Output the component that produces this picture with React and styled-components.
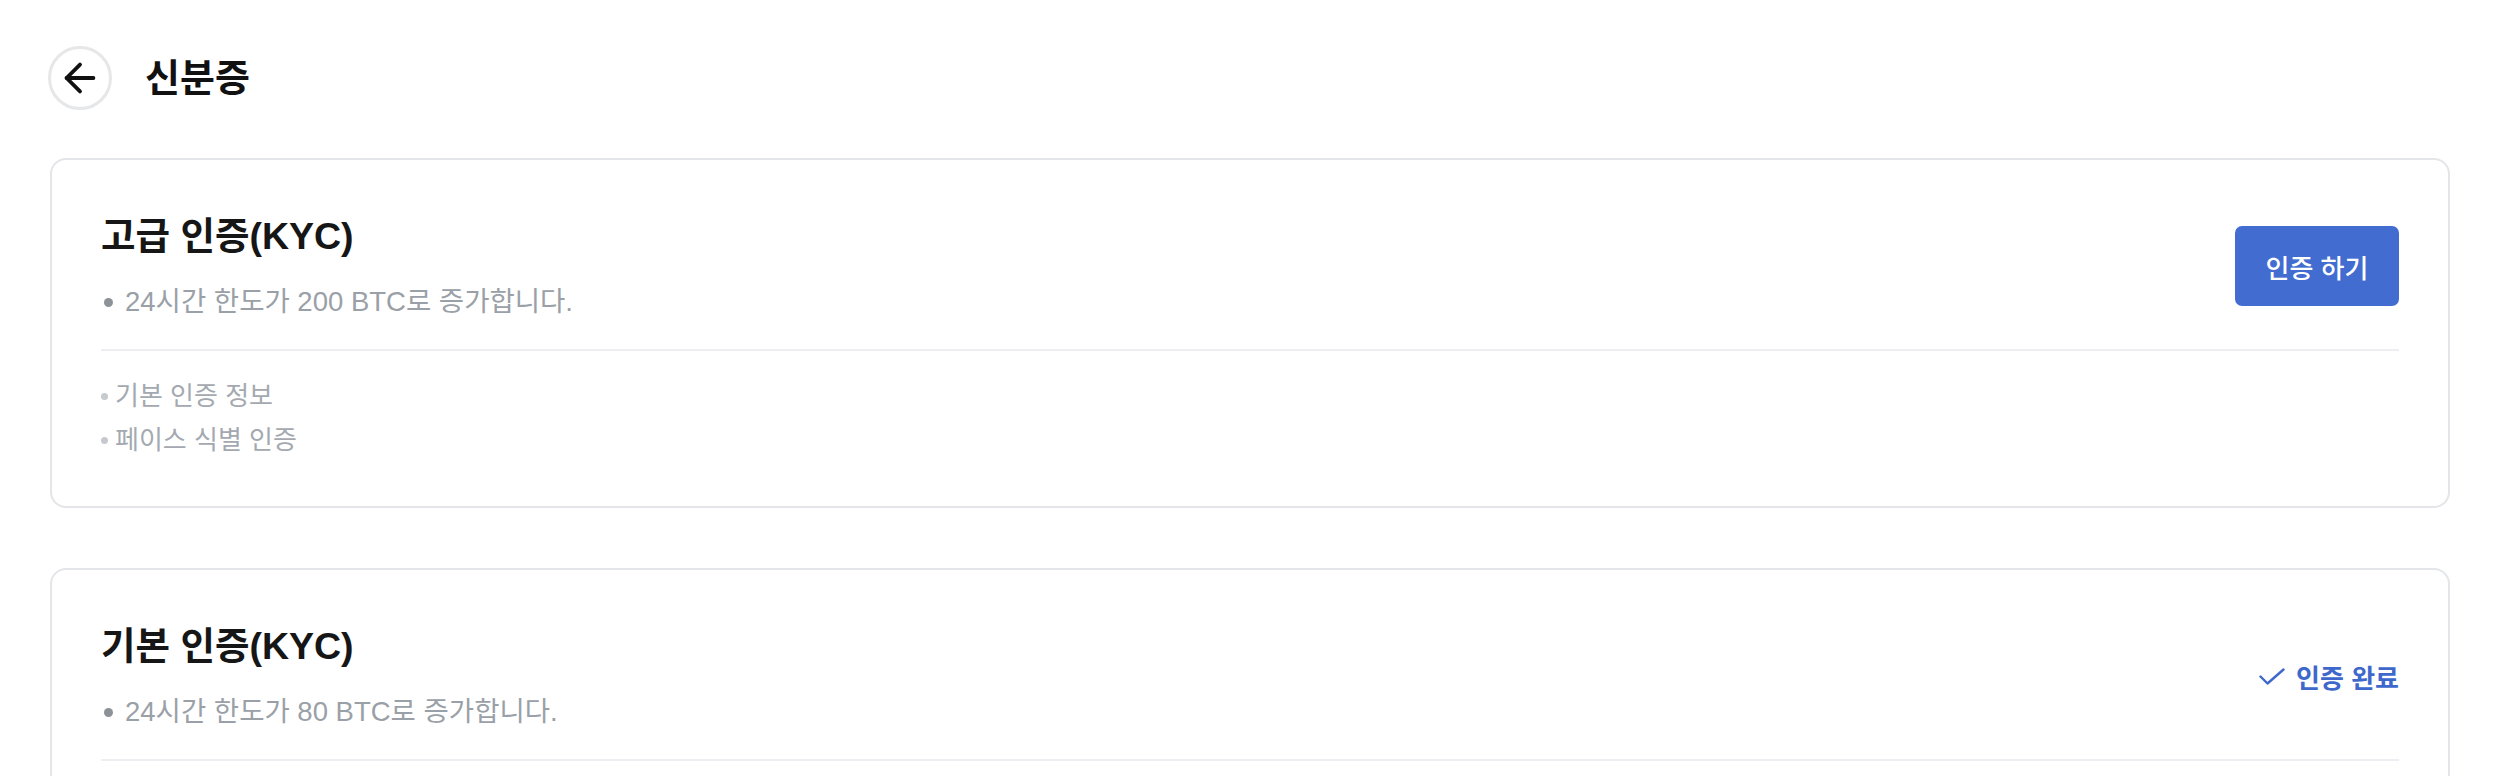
import React from "react";
import styled, { createGlobalStyle } from "styled-components";
import { ArrowLeft } from "lucide-react";

const GlobalStyle = createGlobalStyle`
  body {
    margin: 0;
    background: #ffffff;
    font-family: "Liberation Sans", "Noto Sans CJK KR", sans-serif;
    color: #111111;
  }
`;

const Page = styled.div`
  padding: 46px 58px 40px 50px;
`;

const Header = styled.header`
  display: flex;
  align-items: center;
  gap: 33px;
  margin-left: -2px;
  margin-bottom: 48px;
`;

const BackButton = styled.button`
  width: 64px;
  height: 64px;
  border-radius: 50%;
  border: 3px solid #e6e7e9;
  background: #ffffff;
  display: flex;
  align-items: center;
  justify-content: center;
  padding: 0;
  cursor: pointer;
  color: #111111;
`;

const PageTitle = styled.h1`
  margin: 0;
  font-size: 38px;
  font-weight: 700;
  line-height: 1;
`;

const CardList = styled.div`
  display: flex;
  flex-direction: column;
  gap: 60px;
`;

const Card = styled.section`
  border: 2px solid #e3e5e8;
  border-radius: 16px;
  padding: 52px 49px 44px 49px;
  background: #ffffff;
`;

const TopRow = styled.div`
  display: flex;
  align-items: center;
  justify-content: space-between;
`;

const Info = styled.div`
  display: flex;
  flex-direction: column;
`;

const CardTitle = styled.h2`
  margin: 0;
  font-size: 37.5px;
  font-weight: 600;
  line-height: 48px;
  color: #161616;
`;

const Benefit = styled.p`
  margin: 24px 0 0;
  font-size: 27.5px;
  line-height: 36px;
  color: #9aa0a7;
  display: flex;
  align-items: center;

  &::before {
    content: "";
    width: 9px;
    height: 9px;
    border-radius: 50%;
    background: #8d9298;
    margin: 0 12px 0 3px;
  }
`;

const Divider = styled.hr`
  border: none;
  height: 2px;
  background: #eceef1;
  margin: 29px 0 23px;
`;

const Requirements = styled.ul`
  list-style: none;
  margin: 0;
  padding: 0;
`;

const Requirement = styled.li`
  font-size: 26px;
  line-height: 44px;
  color: #a4a9b0;
  display: flex;
  align-items: center;

  &::before {
    content: "";
    width: 7px;
    height: 7px;
    border-radius: 50%;
    background: #c6c9ce;
    margin-right: 7px;
  }
`;

const VerifyButton = styled.button`
  width: 164px;
  height: 80px;
  border: none;
  border-radius: 7px;
  background: #426ccf;
  color: #ffffff;
  font-family: inherit;
  font-size: 26px;
  font-weight: 500;
  cursor: pointer;
`;

const Done = styled.div`
  display: flex;
  align-items: center;
  gap: 11px;
  color: #3f68cc;
  font-size: 26px;
  font-weight: 600;
`;

const CheckMark = () => (
  <svg width="26" height="17" viewBox="0 0 26 17" fill="none">
    <polyline
      points="1.5,8.5 8.5,15.5 24.5,1.5"
      stroke="currentColor"
      strokeWidth="2.4"
      strokeLinecap="round"
      strokeLinejoin="round"
    />
  </svg>
);

const levels = [
  {
    title: "고급 인증(KYC)",
    benefit: "24시간 한도가 200 BTC로 증가합니다.",
    items: ["기본 인증 정보", "페이스 식별 인증"],
    done: false,
  },
  {
    title: "기본 인증(KYC)",
    benefit: "24시간 한도가 80 BTC로 증가합니다.",
    items: ["국적", "이름", "신분증 번호"],
    done: true,
  },
];

export default function App() {
  return (
    <>
      <GlobalStyle />
      <Page>
        <Header>
          <BackButton aria-label="뒤로">
            <ArrowLeft size={46} strokeWidth={2} />
          </BackButton>
          <PageTitle>신분증</PageTitle>
        </Header>

        <CardList>
          {levels.map((level) => (
            <Card key={level.title}>
              <TopRow>
                <Info>
                  <CardTitle>{level.title}</CardTitle>
                  <Benefit>{level.benefit}</Benefit>
                </Info>
                {level.done ? (
                  <Done>
                    <CheckMark />
                    인증 완료
                  </Done>
                ) : (
                  <VerifyButton>인증 하기</VerifyButton>
                )}
              </TopRow>
              <Divider />
              <Requirements>
                {level.items.map((item) => (
                  <Requirement key={item}>{item}</Requirement>
                ))}
              </Requirements>
            </Card>
          ))}
        </CardList>
      </Page>
    </>
  );
}
